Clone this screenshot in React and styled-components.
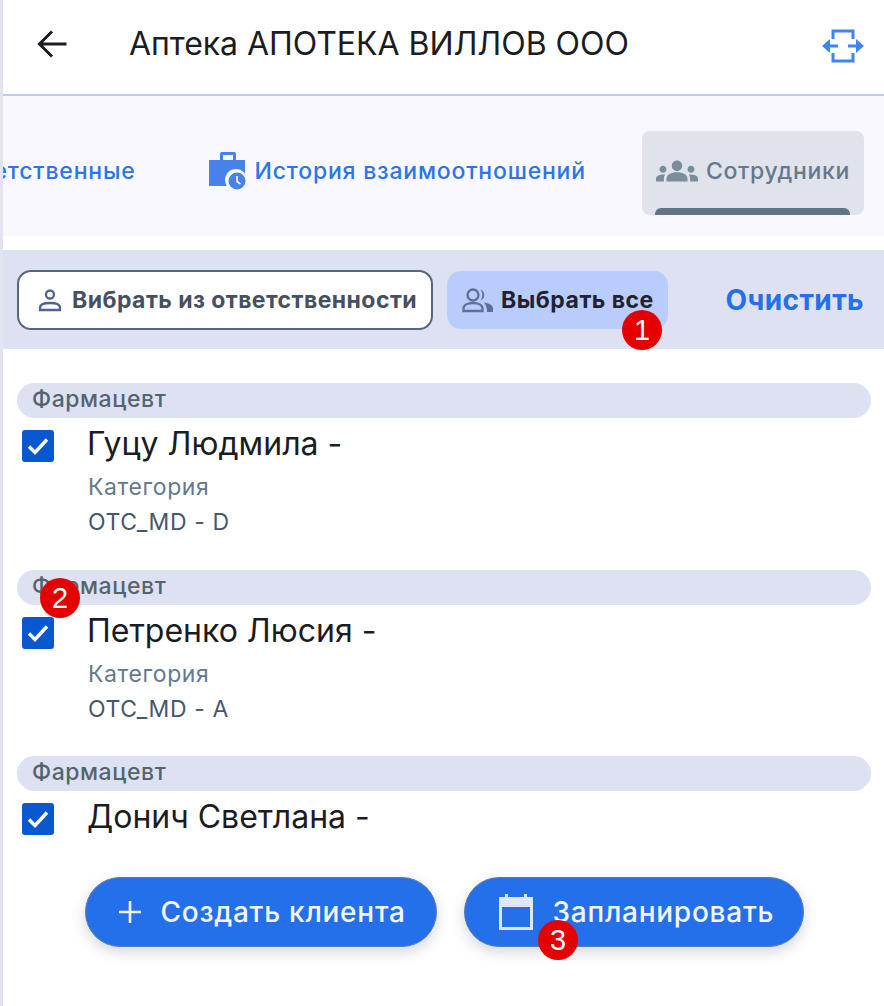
import React from "react";
import styled, { createGlobalStyle } from "styled-components";
import { MdGroups } from "react-icons/md";

const Global = createGlobalStyle`
  html, body { margin: 0; padding: 0; background: #fff; }
  body { font-family: Inter, "Noto Sans", sans-serif; }
  * { box-sizing: border-box; }
`;

const Page = styled.div`
  position: relative;
  width: 884px;
  height: 1006px;
  overflow: hidden;
  display: flex;
  flex-direction: column;
  background: #fff;
  border-left: 3px solid #e4e4f0;
`;

const Header = styled.header`
  height: 96px;
  flex: none;
  display: flex;
  align-items: center;
  padding: 0 20px 6px 34px;
  border-bottom: 2px solid #b8cdfa;
`;

const Title = styled.h1`
  margin: 0 0 0 62px;
  flex: 1;
  font-size: 32px;
  line-height: 36px;
  font-weight: 400;
  letter-spacing: -0.04px;
  color: #1b1c21;
`;

const Tabs = styled.nav`
  height: 140px;
  flex: none;
  display: flex;
  justify-content: flex-end;
  align-items: center;
  gap: 42px;
  padding: 14px 20px 0 0;
  overflow: hidden;
  background: #f9f8fe;
`;

const Tab = styled.div`
  position: relative;
  flex: none;
  height: 84px;
  display: flex;
  align-items: center;
  gap: 8px;
  padding: 0 14px 4px;
  border-radius: 8px;
  overflow: hidden;
  font-size: 23px;
  font-weight: 500;
  letter-spacing: ${(p) => (p.$active ? "0.7px" : "0.8px")};
  color: ${(p) => (p.$active ? "#64798a" : "#2b74ea")};
  background: ${(p) => (p.$active ? "#e0e2ec" : "transparent")};
`;

const Indicator = styled.span`
  position: absolute;
  left: 13px;
  right: 14px;
  bottom: 0;
  height: 7px;
  border-radius: 6px 6px 0 0;
  background: #5f7587;
`;

const Toolbar = styled.div`
  height: 99px;
  margin-top: 14px;
  flex: none;
  display: flex;
  align-items: center;
  padding: 0 20px 0 14px;
  background: #dde1f2;
`;

const OutlineButton = styled.div`
  width: 416px;
  height: 60px;
  display: flex;
  align-items: center;
  gap: 10px;
  padding-left: 19px;
  border: 2px solid #55677c;
  border-radius: 14px;
  background: #fff;
  font-size: 23px;
  font-weight: 700;
  letter-spacing: 0.45px;
  color: #47505f;
  white-space: nowrap;
`;

const TonalButton = styled.div`
  width: 221px;
  height: 58px;
  margin-left: 14px;
  display: flex;
  align-items: center;
  gap: 7px;
  padding-left: 15px;
  border-radius: 14px;
  background: #b8cdfc;
  font-size: 23px;
  font-weight: 700;
  letter-spacing: 0.5px;
  color: #23212f;
  white-space: nowrap;
`;

const ClearButton = styled.div`
  margin-left: auto;
  font-size: 28px;
  font-weight: 700;
  letter-spacing: 0.4px;
  color: #2470eb;
`;

const List = styled.main`
  flex: 1;
  min-height: 0;
  overflow: hidden;
  display: flex;
  flex-direction: column;
  gap: 34px;
  padding: 34px 13px 0 14px;
`;

const Group = styled.section`
  flex: none;
  height: 152.5px;
`;

const RoleBar = styled.div`
  height: 35px;
  display: flex;
  align-items: center;
  padding: 0 0 3px 15px;
  border-radius: 18px;
  background: #dde1f2;
  font-size: 23px;
  font-weight: 500;
  letter-spacing: 0.55px;
  color: #54646f;
`;

const Person = styled.div`
  display: grid;
  grid-template-columns: 70px 1fr;
  padding-top: 7px;
`;

const Check = styled.span`
  width: 32px;
  height: 32px;
  margin: 5px 0 0 5px;
  display: flex;
  align-items: center;
  justify-content: center;
  border-radius: 3px;
  background: #0b57d0;
`;

const Name = styled.div`
  font-size: 32px;
  line-height: 38px;
  color: #1b1c21;
`;

const Category = styled.div`
  margin: 7px 0 0 1px;
  font-size: 23px;
  line-height: 35px;
  letter-spacing: 0.6px;
  color: #64798a;
`;

const Value = styled.div`
  margin-left: 1px;
  font-size: 23px;
  line-height: 35px;
  letter-spacing: 0.6px;
  color: #46586a;
`;

const Footer = styled.footer`
  height: 166px;
  flex: none;
  display: flex;
  justify-content: center;
  gap: 27px;
  padding: 37px 0 0 1px;
  background: #fff;
`;

const Fab = styled.div`
  width: ${(p) => p.$w}px;
  height: 70px;
  display: flex;
  align-items: center;
  gap: ${(p) => p.$gap}px;
  padding-left: ${(p) => p.$pad}px;
  border: 1px solid #5f7aa8;
  border-radius: 35px;
  background: #2470eb;
  box-shadow: 0 5px 14px rgba(60, 70, 90, 0.22);
  font-size: 28px;
  font-weight: 500;
  letter-spacing: 0.75px;
  color: #f4f6ff;
  white-space: nowrap;
`;

const Badge = styled.span`
  position: absolute;
  left: ${(p) => p.$x - 3}px;
  top: ${(p) => p.$y}px;
  width: 40px;
  height: 40px;
  display: flex;
  align-items: center;
  justify-content: center;
  border-radius: 50%;
  background: #e40000;
  color: #fff;
  font-family: "Liberation Sans", sans-serif;
  font-size: 29px;
`;

const BackIcon = () => (
  <svg width="30" height="28" viewBox="0 0 30 28" fill="none" stroke="#1b1c21" strokeWidth="3">
    <path d="M29.500 14H3M15 1.500 2.500 14 15 26.500" />
  </svg>
);

const SwapIcon = () => (
  <svg width="42" height="38" viewBox="0 -4 42 38" fill="none">
    <path d="M11 10V2h20v8M11 24v8h20v-8" stroke="#3f85ef" strokeWidth="3" />
    <path d="M3 17h36" stroke="#3f85ef" strokeWidth="3" strokeDasharray="13 10" />
    <path d="M0 17l8-7v14zM42 17l-8-7v14z" fill="#3f85ef" />
  </svg>
);

const CaseClockIcon = () => (
  <svg width="41" height="38" viewBox="-3 0 41 38">
    <path
      fill="#4782ea"
      fillRule="evenodd"
      d="M13 0h12a2 2 0 0 1 2 2v6h9v26H0V8h11V2a2 2 0 0 1 2-2zm1 3v5h10V3z"
    />
    <circle cx="27" cy="28" r="11" fill="#f9f8fe" />
    <circle cx="28" cy="29" r="8.500" fill="#4782ea" />
    <path d="M28 24v5.500l3.500 2.500" stroke="#f9f8fe" strokeWidth="1.600" fill="none" />
  </svg>
);

const PersonIcon = () => (
  <svg width="24" height="24" viewBox="0 0 24 24" fill="none" stroke="#4f6397" strokeWidth="2.300">
    <circle cx="12" cy="6.500" r="4" />
    <path d="M2 22v-2.500C2 16.500 6 15 12 15s10 1.500 10 4.500V22z" />
  </svg>
);

const PeopleIcon = () => (
  <svg width="32" height="26" viewBox="0 0 32 26" fill="none">
    <circle cx="11" cy="8" r="5.500" stroke="#5f7098" strokeWidth="2.300" />
    <path d="M1.500 24v-2.500c0-3.500 4-5.500 9.500-5.500s9.500 2 9.500 5.500V24z" stroke="#5f7098" strokeWidth="2.300" />
    <path d="M18 2.500a5.700 5.700 0 0 1 0 11c3-1.500 3-9.500 0-11zM22 15.500c5 .5 9 2.500 9 6V25h-6c0-4-1-7-3-9.500z" fill="#5f7098" />
  </svg>
);

const CheckMark = () => (
  <svg width="22" height="18" viewBox="0 0 22 18" fill="none" stroke="#fff" strokeWidth="3.400">
    <path d="M2 9.500 8 15.500 20 2.500" />
  </svg>
);

const PlusIcon = () => (
  <svg width="22" height="22" viewBox="0 0 22 22" stroke="#f4f6ff" strokeWidth="2.600">
    <path d="M11 0v22M0 11h22" />
  </svg>
);

const CalendarIcon = () => (
  <svg width="34" height="36" viewBox="0 0 34 36" fill="#dfe8fb">
    <path
      fillRule="evenodd"
      d="M6 0h3v3h16V0h3v3h6v33H0V3h6zM3 13v20h28V13z"
    />
  </svg>
);

const people = [
  { name: "Гуцу Людмила -", value: "OTC_MD - D" },
  { name: "Петренко Люсия -", value: "OTC_MD - A" },
  { name: "Донич Светлана -", value: "" },
];

export default function App() {
  return (
    <>
      <Global />
      <Page>
        <Header>
          <BackIcon />
          <Title>Аптека АПОТЕКА ВИЛЛОВ ООО</Title>
          <SwapIcon />
        </Header>
        <Tabs>
          <Tab>Ответственные</Tab>
          <Tab>
            <CaseClockIcon />
            История взаимоотношений
          </Tab>
          <Tab $active>
            <MdGroups size={42} color="#7a8d9c" />
            Сотрудники
            <Indicator />
          </Tab>
        </Tabs>
        <Toolbar>
          <OutlineButton>
            <PersonIcon />
            Вибрать из ответственности
          </OutlineButton>
          <TonalButton>
            <PeopleIcon />
            Выбрать все
          </TonalButton>
          <ClearButton>Очистить</ClearButton>
        </Toolbar>
        <List>
          {people.map((p) => (
            <Group key={p.name}>
              <RoleBar>Фармацевт</RoleBar>
              <Person>
                <Check>
                  <CheckMark />
                </Check>
                <div>
                  <Name>{p.name}</Name>
                  {p.value && <Category>Категория</Category>}
                  {p.value && <Value>{p.value}</Value>}
                </div>
              </Person>
            </Group>
          ))}
        </List>
        <Footer>
          <Fab $w={352} $gap={20} $pad={33}>
            <PlusIcon />
            Создать клиента
          </Fab>
          <Fab $w={340} $gap={20} $pad={34}>
            <CalendarIcon />
            Запланировать
          </Fab>
        </Footer>
        <Badge $x={622} $y={310}>1</Badge>
        <Badge $x={40} $y={578}>2</Badge>
        <Badge $x={538} $y={920}>3</Badge>
      </Page>
    </>
  );
}
